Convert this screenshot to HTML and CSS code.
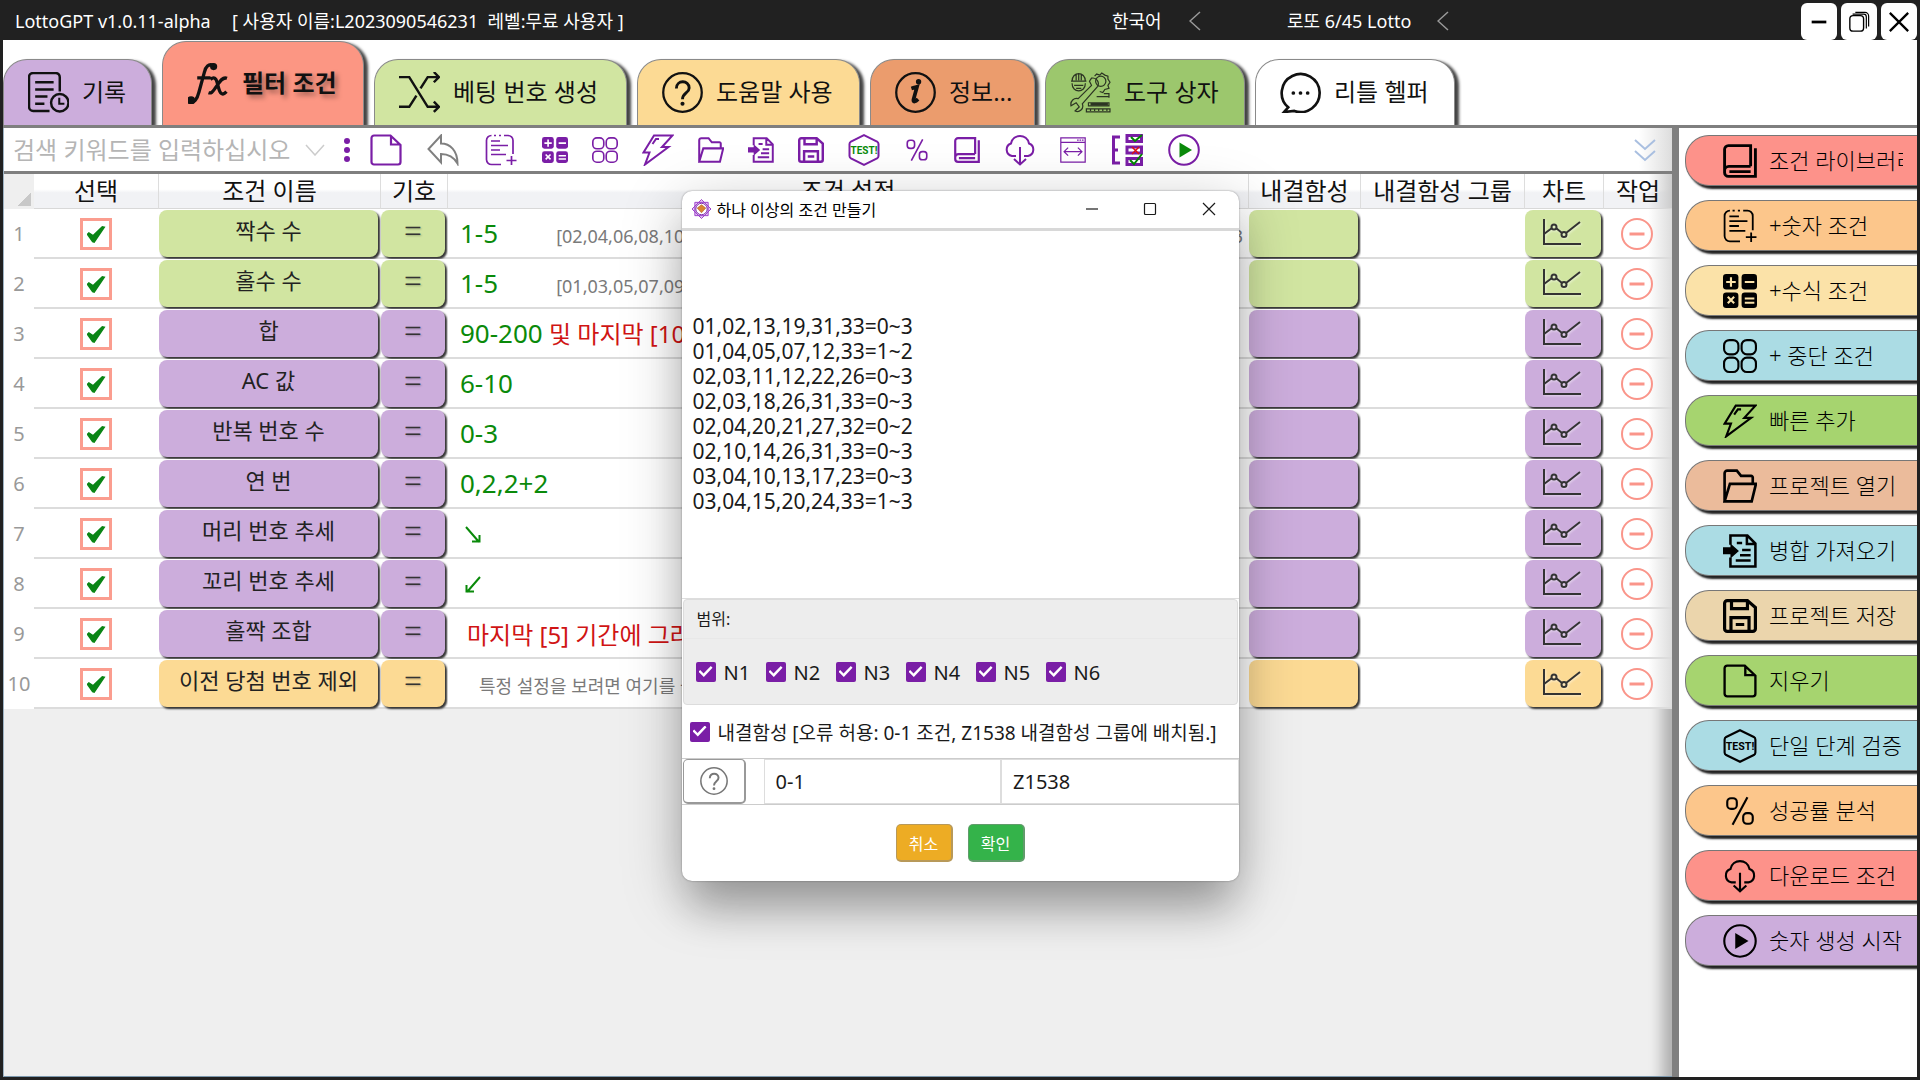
FILE: index.html
```html
<!DOCTYPE html>
<html lang="ko">
<head>
<meta charset="utf-8">
<title>LottoGPT</title>
<link rel="stylesheet" href="styles.css">
</head>
<body>
<svg class="sprite" aria-hidden="true">
  <symbol id="doc" viewBox="0 0 32 32"><path d="M4 1.500h16.500L30.500 11v17a2.500 2.500 0 0 1-2.500 2.500H4A2.500 2.500 0 0 1 1.500 28V4A2.500 2.500 0 0 1 4 1.500zM21 2v8.500h9" stroke-width="2.200"/></symbol>
  <symbol id="back" viewBox="0 0 32 32"><path d="M14 1.500v8c9 0 16.500 7 16.500 20-4-7-9-9.500-16.500-9.500v8.500L1.500 15z" stroke-width="2"/></symbol>
  <symbol id="list" viewBox="0 0 32 32"><path d="M9 1.500h2M14 1.500h2M19 1.500h4a5 5 0 0 1 5 5V20M6.500 1.500a5 5 0 0 0-5 5v19a5 5 0 0 0 5 5H16M6 7h9M6 11.500h17M6 16h9M6 20.500h15M26.500 22v9M21.500 26.500H31.500" stroke-width="1.700"/></symbol>
  <symbol id="calc" viewBox="0 0 32 32"><g fill="currentColor" stroke="none"><rect width="14.500" height="14.500" rx="3"/><rect x="17.500" width="14.500" height="14.500" rx="3"/><rect y="17.500" width="14.500" height="14.500" rx="3"/><rect x="17.500" y="17.500" width="14.500" height="14.500" rx="3"/></g><path class="cut" d="M7.500 3v9M3 7.500h9M20.500 7.500h9M4.500 21.500l6 6M10.500 21.500l-6 6M20.500 23h9M20.500 27h9" stroke-width="2"/></symbol>
  <symbol id="four" viewBox="0 0 32 32"><g stroke-width="2"><rect x="1" y="1" width="13.500" height="13.500" rx="5"/><rect x="17.500" y="1" width="13.500" height="13.500" rx="5"/><rect x="1" y="17.500" width="13.500" height="13.500" rx="5"/><rect x="17.500" y="17.500" width="13.500" height="13.500" rx="5"/></g></symbol>
  <symbol id="bolt" viewBox="0 0 32 32"><path d="M12 1.500h18.500L20 13h6.500L3 30.500l4.500-12H1.500zM10.500 10l3.500-5h3" stroke-width="2"/></symbol>
  <symbol id="folder" viewBox="0 0 32 32"><path d="M1.500 30.500V4a2.500 2.500 0 0 1 2.500-2.500h9l4 5h9.500A1.500 1.500 0 0 1 28 8v6M1.500 30.500l5-16.500h24.500l-4 16.500z" stroke-width="2.500"/></symbol>
  <symbol id="import" viewBox="0 0 32 32"><path d="M7 10V1.500h16L30.500 9v21.500H7V22M22.500 2v7.500h8M13 8.500h5M18 15h8M16 20h10M12 25h14" stroke-width="2.400"/><path d="M0 12.500h7V9l8 7-8 7v-4H0z" fill="currentColor" stroke="none"/></symbol>
  <symbol id="save" viewBox="0 0 32 32"><path d="M4 1.500h19L30.500 8v20a2.500 2.500 0 0 1-2.500 2.500H4A2.500 2.500 0 0 1 1.500 28V4A2.500 2.500 0 0 1 4 1.500zM8 2v7h15V2M7.500 30V17.500h17V30M12 24h8"/></symbol>
  <symbol id="test" viewBox="0 0 32 32"><path d="M16 1.200L29 7.500q1.500 1 1.500 2.500v12q0 1.500-1.500 2.500L16 30.800 3 24.500Q1.500 23.500 1.500 22V10q0-1.500 1.500-2.500z" stroke-width="2"/><text class="test" x="16" y="20" text-anchor="middle">TEST!</text></symbol>
  <symbol id="percent" viewBox="0 0 32 32"><rect x="4" y="4" width="9" height="10" rx="3.500"/><rect x="19" y="18" width="9" height="10" rx="3.500"/><path d="M23 3L9 29"/></symbol>
  <symbol id="book" viewBox="0 0 32 32"><path d="M26 21V1.500H5A3.500 3.500 0 0 0 1.500 5v22A3.500 3.500 0 0 0 5 30.500h25.500V4M26 21H5.500a4 4 0 0 0-4 4M6 26h20" stroke-width="2.700"/></symbol>
  <symbol id="cloud" viewBox="0 0 32 32"><path d="M12 22H8a6.500 6.500 0 0 1-1-12.500C9-.5 23-.5 25 9.500A6.500 6.500 0 0 1 24 22h-4M16 13v17M10 25l6 5.500 6-5.500" stroke-width="2"/></symbol>
  <symbol id="win" viewBox="0 0 32 32"><path d="M1 1h30v30H1zM1 6.500h30M21 3.800h2M24 3.800h2M27 3.800h2M5 18h22M10 13l-5 5 5 5M22 13l5 5-5 5" stroke-width="1.500"/></symbol>
  <symbol id="tree" viewBox="0 0 32 32"><path d="M9 3H2.500v26H9M2.500 16H7" stroke-width="3"/><g stroke-width="3"><rect x="16" y="1.500" width="14.500" height="6"/><rect x="16" y="13" width="14.500" height="6"/><rect x="16" y="24.500" width="14.500" height="6"/></g><path d="M20 3l4 4 7-6M19 26l4 4 8-10" stroke="#080"/><path d="M21 13l7 7M28 13l-7 7" stroke="#d11" stroke-width="1.500"/></symbol>
  <symbol id="play" viewBox="0 0 32 32"><circle cx="16" cy="16" r="14.800" stroke-width="2"/><path class="tri" d="M11.500 8.500L24 16l-12.500 7.500z"/></symbol>
  <symbol id="record" viewBox="0 0 40 40"><path d="M31 19V5a4 4 0 0 0-4-4H5a4 4 0 0 0-4 4v29a4 4 0 0 0 4 4h16M7 10h18M7 17h18M7 24h12M7 31h9" stroke-width="2.400"/><circle cx="31" cy="30" r="8.500" stroke-width="2.400"/><path d="M30.500 25v6h5" stroke-width="2"/></symbol>
  <symbol id="fx" viewBox="0 0 40 40"><path d="M2 37c4 3 7-2 8.500-8L16 9c1-5 4-9 9-6.500M9 14.500h13M22 16c5-4 6 1 7.500 7s3.500 10 8 5M38 15c-5-2-8 5-11 9s-4 6-7 5" stroke-width="3.200"/><circle cx="3" cy="36.500" r="2.500" fill="currentColor"/><circle cx="25" cy="3.500" r="2" fill="currentColor"/></symbol>
  <symbol id="shuffle" viewBox="0 0 40 40"><path d="M0 5h10l18 29h11M0 34h10l7-11M21 16l7-11h11M34 0l5 5-5 5M34 29l5 5-5 5" stroke-width="2.400"/></symbol>
  <symbol id="help" viewBox="0 0 40 40"><circle cx="20" cy="20" r="18.800" stroke-width="2.200"/><path d="M14 16c0-8.500 12.500-8.500 12.500-.5 0 5-6.500 5-6.500 11" stroke-width="2.800"/><circle cx="20" cy="31" r="2" fill="currentColor" stroke="none"/></symbol>
  <symbol id="info" viewBox="0 0 40 40"><circle cx="20" cy="20" r="18.800" stroke-width="2.200"/><path d="M16 16c3-1 4-1 5.500-1.500L18 27c-.5 3 2 2 4.500-.5" stroke-width="3.600"/><circle cx="23" cy="9.500" r="2.600" fill="currentColor" stroke="none"/></symbol>
  <symbol id="tools" viewBox="0 0 40 40"><g stroke-width="1.200"><path d="M1 9h15M2 9c0-10 13-10 13 0M6 2v6M8.500 1v7M11 2v6M2 11c0 10 13 10 13 0M4 13h9M6 16h5M24 4l2-2 3 1 2-2 3 2 3 1v3l2 3-2 3 1 3-4 1-2 3-3-1"/><circle cx="30" cy="9" r="5"/><path d="M21 6c5-1 8 4 6 8L12 31c2 5-3 9-7 7l4-4-3-4-5 3c-1-5 3-8 7-7L21 13l-2-4z"/><path d="M26 24h12M33 21h5v4M18 30h20v3H18zM16 36h23v3H16zM20 36v2M24 36v2M28 36v2M32 36v2M36 36v2"/></g><path d="M20 31.500h17" stroke-width="2.500"/></symbol>
  <symbol id="chat" viewBox="0 0 40 40"><path d="M8 34.500A18.500 18.500 0 1 1 14 38L4 39z" stroke-width="2.600"/><g fill="currentColor" stroke="none"><circle cx="13" cy="20.500" r="1.800"/><circle cx="20" cy="20.500" r="1.800"/><circle cx="27" cy="20.500" r="1.800"/></g></symbol>
  <symbol id="chart" viewBox="0 0 38 26"><path d="M1 0v25h37M1 15l8-6M13 9l6 5M23 14L37 3" stroke-width="2"/><circle cx="11" cy="8" r="2.500" stroke-width="2"/><circle cx="21" cy="15.500" r="2.500" stroke-width="2"/></symbol>
  <symbol id="minus" viewBox="0 0 32 32"><circle cx="16" cy="16" r="15" stroke-width="2"/><path d="M8.500 16h15"/></symbol>
  <symbol id="chev" viewBox="0 0 12 20"><path d="M11 1L1 10l10 9" stroke-width="1.500"/></symbol>
  <symbol id="down" viewBox="0 0 20 12"><path d="M1 1l9 10 9-10" stroke-width="1.500"/></symbol>
</svg>

<header class="titlebar">
  <span class="app">LottoGPT v1.0.11-alpha</span>
  <span class="user">[ 사용자 이름:L2023090546231&nbsp; 레벨:무료 사용자 ]</span>
  <button class="pick">한국어 <svg><use href="#chev"/></svg></button>
  <button class="pick game">로또 6/45 Lotto <svg><use href="#chev"/></svg></button>
  <div class="controls">
    <button aria-label="최소화"><svg viewBox="0 0 24 24"><path d="M4 12h16" stroke-width="3"/></svg></button>
    <button aria-label="복원"><svg viewBox="0 0 24 24"><rect x="2" y="5" width="15" height="17" rx="3.500" stroke-width="1.500"/><path d="M5 3.500h12a3 3 0 0 1 3 3V19M8 1.500h10.500a4 4 0 0 1 4 4V17" stroke-width="1.300"/></svg></button>
    <button aria-label="닫기"><svg viewBox="0 0 24 24"><path d="M2 2l20 20M22 2L2 22" stroke-width="2.500"/></svg></button>
  </div>
</header>

<nav class="tabs">
  <button class="tab t1"><svg><use href="#record"/></svg><span>기록</span></button>
  <button class="tab t2 active"><svg><use href="#fx"/></svg><span>필터 조건</span></button>
  <button class="tab t3"><svg><use href="#shuffle"/></svg><span>베팅 번호 생성</span></button>
  <button class="tab t4"><svg><use href="#help"/></svg><span>도움말 사용</span></button>
  <button class="tab t5"><svg><use href="#info"/></svg><span>정보...</span></button>
  <button class="tab t6"><svg class="faint"><use href="#tools"/></svg><span>도구 상자</span></button>
  <button class="tab t7"><svg><use href="#chat"/></svg><span>리틀 헬퍼</span></button>
</nav>

<div class="work">
  <main class="left">
    <div class="toolbar">
      <input class="search" type="text" aria-label="검색" placeholder="검색 키워드를 입력하십시오">
      <svg class="drop"><use href="#down"/></svg>
      <svg class="dots" viewBox="0 0 6 24"><circle cx="3" cy="3" r="3"/><circle cx="3" cy="12" r="3"/><circle cx="3" cy="21" r="3"/></svg>
      <div class="tools">
        <button class="big" aria-label="지우기"><svg><use href="#doc"/></svg></button>
        <button class="big wide undo" aria-label="되돌리기"><svg><use href="#back"/></svg></button>
        <button class="big wide" aria-label="숫자 조건"><svg><use href="#list"/></svg></button>
        <button aria-label="수식 조건"><svg><use href="#calc"/></svg></button>
        <button aria-label="중단 조건"><svg><use href="#four"/></svg></button>
        <button class="big" aria-label="빠른 추가"><svg><use href="#bolt"/></svg></button>
        <button aria-label="프로젝트 열기"><svg><use href="#folder"/></svg></button>
        <button aria-label="병합 가져오기"><svg><use href="#import"/></svg></button>
        <button aria-label="프로젝트 저장"><svg><use href="#save"/></svg></button>
        <button class="big green" aria-label="단일 단계 검증"><svg><use href="#test"/></svg></button>
        <button class="thin" aria-label="성공률 분석"><svg><use href="#percent"/></svg></button>
        <button aria-label="조건 라이브러리"><svg><use href="#book"/></svg></button>
        <button class="big" aria-label="다운로드 조건"><svg><use href="#cloud"/></svg></button>
        <button aria-label="열 너비"><svg><use href="#win"/></svg></button>
        <button class="big wide" aria-label="조건 선택"><svg><use href="#tree"/></svg></button>
        <button class="big green" aria-label="숫자 생성 시작"><svg><use href="#play"/></svg></button>
      </div>
      <button class="more" aria-label="더 보기"><svg viewBox="0 0 22 24"><path d="M1 2l10 9L21 2M1 13l10 9 10-9" stroke-width="2"/></svg></button>
    </div>

    <table class="grid">
      <colgroup><col class="c0"><col class="c1"><col class="c2"><col class="c3"><col><col class="c5"><col class="c6"><col class="c7"><col class="c8"></colgroup>
      <thead><tr><th class="corner"></th><th>선택</th><th>조건 이름</th><th>기호</th><th>조건 설정</th><th>내결함성</th><th>내결함성 그룹</th><th>차트</th><th>작업</th></tr></thead>
      <tbody>
        <tr class="lime"><td>1</td><td><input type="checkbox" checked aria-label="1"></td><td><button>짝수 수</button></td><td><button class="eq">=</button></td><td class="set"><b>1-5</b><small class="nums">[02,04,06,08,10,12,14,16,18,20,22,24,26,28,30,32,34,36,38,40,42,44] 1,2,3,4,5,6,3,3</small></td><td><button aria-label="내결함성"></button></td><td></td><td><button class="ch" aria-label="차트"><svg><use href="#chart"/></svg></button></td><td><button class="del" aria-label="삭제"><svg><use href="#minus"/></svg></button></td></tr>
        <tr class="lime"><td>2</td><td><input type="checkbox" checked aria-label="2"></td><td><button>홀수 수</button></td><td><button class="eq">=</button></td><td class="set"><b>1-5</b><small class="nums">[01,03,05,07,09,11,13,15,17,19,21,23,25,27,29,31,33,35,37,39,41,43,45,1,2,2,2,2,2,</small></td><td><button aria-label="내결함성"></button></td><td></td><td><button class="ch" aria-label="차트"><svg><use href="#chart"/></svg></button></td><td><button class="del" aria-label="삭제"><svg><use href="#minus"/></svg></button></td></tr>
        <tr><td>3</td><td><input type="checkbox" checked aria-label="3"></td><td><button>합</button></td><td><button class="eq">=</button></td><td class="set"><b>90-200</b> <em>및 마지막 [10] 기간</em></td><td><button aria-label="내결함성"></button></td><td></td><td><button class="ch" aria-label="차트"><svg><use href="#chart"/></svg></button></td><td><button class="del" aria-label="삭제"><svg><use href="#minus"/></svg></button></td></tr>
        <tr><td>4</td><td><input type="checkbox" checked aria-label="4"></td><td><button>AC 값</button></td><td><button class="eq">=</button></td><td class="set"><b>6-10</b></td><td><button aria-label="내결함성"></button></td><td></td><td><button class="ch" aria-label="차트"><svg><use href="#chart"/></svg></button></td><td><button class="del" aria-label="삭제"><svg><use href="#minus"/></svg></button></td></tr>
        <tr><td>5</td><td><input type="checkbox" checked aria-label="5"></td><td><button>반복 번호 수</button></td><td><button class="eq">=</button></td><td class="set"><b>0-3</b></td><td><button aria-label="내결함성"></button></td><td></td><td><button class="ch" aria-label="차트"><svg><use href="#chart"/></svg></button></td><td><button class="del" aria-label="삭제"><svg><use href="#minus"/></svg></button></td></tr>
        <tr><td>6</td><td><input type="checkbox" checked aria-label="6"></td><td><button>연 번</button></td><td><button class="eq">=</button></td><td class="set"><b>0,2,2+2</b></td><td><button aria-label="내결함성"></button></td><td></td><td><button class="ch" aria-label="차트"><svg><use href="#chart"/></svg></button></td><td><button class="del" aria-label="삭제"><svg><use href="#minus"/></svg></button></td></tr>
        <tr><td>7</td><td><input type="checkbox" checked aria-label="7"></td><td><button>머리 번호 추세</button></td><td><button class="eq">=</button></td><td class="set"><svg class="arrow" viewBox="0 0 18 18"><path d="M2 1l13 15M8 15.500h7.500V9"/></svg></td><td><button aria-label="내결함성"></button></td><td></td><td><button class="ch" aria-label="차트"><svg><use href="#chart"/></svg></button></td><td><button class="del" aria-label="삭제"><svg><use href="#minus"/></svg></button></td></tr>
        <tr><td>8</td><td><input type="checkbox" checked aria-label="8"></td><td><button>꼬리 번호 추세</button></td><td><button class="eq">=</button></td><td class="set"><svg class="arrow" viewBox="0 0 18 18"><path d="M16 1L3 16M10 15.500H2.500V9"/></svg></td><td><button aria-label="내결함성"></button></td><td></td><td><button class="ch" aria-label="차트"><svg><use href="#chart"/></svg></button></td><td><button class="del" aria-label="삭제"><svg><use href="#minus"/></svg></button></td></tr>
        <tr><td>9</td><td><input type="checkbox" checked aria-label="9"></td><td><button>홀짝 조합</button></td><td><button class="eq">=</button></td><td class="set"><em class="lead">마지막 [5] 기간에 그려진</em></td><td><button aria-label="내결함성"></button></td><td></td><td><button class="ch" aria-label="차트"><svg><use href="#chart"/></svg></button></td><td><button class="del" aria-label="삭제"><svg><use href="#minus"/></svg></button></td></tr>
        <tr class="amber"><td>10</td><td><input type="checkbox" checked aria-label="10"></td><td><button>이전 당첨 번호 제외</button></td><td><button class="eq">=</button></td><td class="set"><small class="hint">특정 설정을 보려면 여기를 클릭하세요</small></td><td><button aria-label="내결함성"></button></td><td></td><td><button class="ch" aria-label="차트"><svg><use href="#chart"/></svg></button></td><td><button class="del" aria-label="삭제"><svg><use href="#minus"/></svg></button></td></tr>
      </tbody>
    </table>
  </main>

  <aside class="side">
    <button class="coral"><svg><use href="#book"/></svg><span>조건 라이브러리</span></button>
    <button class="orange"><svg><use href="#list"/></svg><span>+숫자 조건</span></button>
    <button class="cream"><svg><use href="#calc"/></svg><span>+수식 조건</span></button>
    <button class="sky"><svg><use href="#four"/></svg><span>+ 중단 조건</span></button>
    <button class="leaf"><svg><use href="#bolt"/></svg><span>빠른 추가</span></button>
    <button class="peach"><svg><use href="#folder"/></svg><span>프로젝트 열기</span></button>
    <button class="sky"><svg><use href="#import"/></svg><span>병합 가져오기</span></button>
    <button class="sand"><svg><use href="#save"/></svg><span>프로젝트 저장</span></button>
    <button class="leaf"><svg><use href="#doc"/></svg><span>지우기</span></button>
    <button class="sky"><svg><use href="#test"/></svg><span>단일 단계 검증</span></button>
    <button class="orange thin"><svg><use href="#percent"/></svg><span>성공률 분석</span></button>
    <button class="coral"><svg><use href="#cloud"/></svg><span>다운로드 조건</span></button>
    <button class="violet"><svg><use href="#play"/></svg><span>숫자 생성 시작</span></button>
  </aside>
</div>

<section class="dialog" role="dialog" aria-labelledby="dlg-title">
  <div class="dlg-head">
    <svg class="logo" viewBox="0 0 20 20"><path d="M3 3h14v14H3zM10 0l10 10-10 10L0 10z" fill="#e4c8f4" stroke="#9a3cc8" stroke-width="1"/><circle cx="10" cy="10" r="6" fill="#fff" stroke="#7a2aa8" stroke-width="1"/><path d="M10 5.500l4.500 3.500-4.500 5-4.500-5z" fill="#d98432" stroke="#a85a20" stroke-width=".6"/></svg>
    <h1 id="dlg-title">하나 이상의 조건 만들기</h1>
    <button aria-label="최소화"><svg viewBox="0 0 14 14"><path d="M1 7h12"/></svg></button>
    <button aria-label="최대화"><svg viewBox="0 0 14 14"><rect x="1.500" y="1.500" width="11" height="11" rx="1"/></svg></button>
    <button aria-label="닫기"><svg viewBox="0 0 14 14"><path d="M1 1l12 12M13 1L1 13"/></svg></button>
  </div>
  <textarea aria-label="조건 목록" spellcheck="false">01,02,13,19,31,33=0~3
01,04,05,07,12,33=1~2
02,03,11,12,22,26=0~3
02,03,18,26,31,33=0~3
02,04,20,21,27,32=0~2
02,10,14,26,31,33=0~3
03,04,10,13,17,23=0~3
03,04,15,20,24,33=1~3</textarea>
  <div class="range">
    <div class="range-name">범위:</div>
    <div class="range-list">
      <label><input type="checkbox" checked>N1</label>
      <label><input type="checkbox" checked>N2</label>
      <label><input type="checkbox" checked>N3</label>
      <label><input type="checkbox" checked>N4</label>
      <label><input type="checkbox" checked>N5</label>
      <label><input type="checkbox" checked>N6</label>
    </div>
  </div>
  <label class="tolerance"><input type="checkbox" checked>내결함성 [오류 허용: 0-1 조건, Z1538 내결함성 그룹에 배치됨.]</label>
  <div class="fields">
    <button class="ask" aria-label="도움말"><svg><use href="#help"/></svg></button>
    <input type="text" value="0-1" aria-label="오류 허용">
    <input type="text" value="Z1538" aria-label="내결함성 그룹">
  </div>
  <div class="actions"><button class="cancel">취소</button><button class="ok">확인</button></div>
</section>
</body>
</html>
```
FILE: styles.css
```css
* { box-sizing: border-box; }
body {
  margin: 0;
  min-height: 100vh;
  display: flex;
  flex-direction: column;
  position: relative;
  border: 3px solid #212121;
  background: #fff;
  color: #111;
  font-family: "Noto Sans", "Noto Sans CJK KR", sans-serif;
}
button, input, textarea { font: inherit; color: inherit; margin: 0; padding: 0; border: 0; background: none; }
svg { fill: none; stroke: currentColor; stroke-width: 3; flex: none; display: block; }
.sprite { display: none; }

/* title bar */
.titlebar { height: 37px; display: flex; align-items: center; background: #212121; color: #fff; font-size: 18px; line-height: 32px; }
.titlebar > span, .pick { padding-bottom: 2px; }
.app { width: 229px; padding-left: 12px; white-space: nowrap; }
.user { flex: 1; white-space: nowrap; }
.pick { display: flex; align-items: center; gap: 27px; width: 175px; white-space: nowrap; }
.pick.game { width: 514px; gap: 26px; }
.pick svg { width: 12px; height: 20px; color: #999; }
.controls { display: flex; gap: 4px; }
.controls button { width: 36px; height: 37px; display: grid; place-items: center; background: #fff; color: #000; border-radius: 6px; }
.controls svg { width: 22px; height: 24px; }

/* tabs */
.tabs { height: 88px; display: flex; align-items: flex-end; gap: 10px; overflow: hidden; border-bottom: 3px solid #7f7f7f; font-size: 24px; }
.tab { height: 66px; display: flex; align-items: center; gap: 13px; padding-left: 24px; white-space: nowrap; border: 1px solid #8a8a8a; border-bottom: 0; border-radius: 24px 24px 0 0; box-shadow: 4px 2px 3px #444; }
.tab span { padding-bottom: 4px; }
.tab svg { width: 41px; height: 41px; }
.tab.active { height: 84px; font-weight: 700; text-shadow: 3px 3px 5px #0006; padding-left: 25px; }
.faint { opacity: .8; }
.t1 { width: 149px; background: #ccaddc; }
.t2 { width: 202px; background: #fc9683; }
.t3 { width: 253px; background: #d1e5a1; }
.t4 { width: 223px; background: #fcda94; }
.t5 { width: 165px; background: #eb9c6d; }
.t6 { width: 200px; background: #9cc76d; }
.t7 { width: 200px; background: #fff; }

/* main area */
.work { flex: 1; display: flex; }
.left { flex: 1; min-width: 0; background: #efefef; border-left: 1px solid #9fb4c4; border-bottom: 1px solid #7c98ad; box-shadow: inset -22px 0 14px -12px #0004; }
.toolbar { height: 46px; display: flex; align-items: center; background: linear-gradient(90deg, #fff 98%, #ddd); border-bottom: 3px solid #7f7f7f; color: #7a1ea6; }
.search { width: 287px; height: 40px; padding-left: 9px; font-size: 24px; color: #333; outline: 0; }
.search::placeholder { color: #b5b5b5; opacity: 1; }
.drop { width: 20px; height: 12px; margin: 0 19px 0 14px; color: #ccc; }
.dots { width: 6px; height: 24px; fill: currentColor; stroke: none; margin-right: 20px; }
.tools { display: flex; align-items: center; gap: 24px; }
.tools button svg { width: 26px; height: 26px; }
.tools .big svg { width: 32px; height: 32px; stroke-width: 2; }
.tools .wide svg { width: 34px; }
.tools .undo { color: #808080; }
.thin svg { stroke-width: 2; }
.tools .green { --accent: #0a8a0a; }
.cut { stroke: var(--gap, #fff); }
.tri { fill: var(--accent, currentColor); stroke: none; }
.test { fill: var(--accent, currentColor); stroke: none; font: 700 10px Roboto, sans-serif; }
.more { margin: 0 16px 0 auto; color: #a9bfe0; }
.more svg { width: 22px; height: 24px; }

/* condition table */
.grid { width: 100%; table-layout: fixed; border-collapse: separate; border-spacing: 0; }
.c0 { width: 30px; } .c1 { width: 125px; } .c2 { width: 222px; } .c3 { width: 67px; }
.c5 { width: 112px; } .c6 { width: 164px; } .c7 { width: 79px; } .c8 { width: 68px; }
th { height: 35px; padding: 0; font-size: 24px; font-weight: 400; line-height: 34px; white-space: nowrap; border-right: 1px solid #ddd; border-bottom: 1px solid #d8d8d8; background: linear-gradient(#fff 45%, #f1f2f5 55%); }
th:last-child { border-right: 0; }
th.corner { background: linear-gradient(135deg, transparent 50%, #c8c8c8 50%) 14px 17px / 13px 15px no-repeat #efefef; border: 0; }
td { height: 50px; padding: 0; background: #fff; border-bottom: 2px solid #dcdcdc; }
td:first-child { text-align: center; font-size: 20px; color: #999; border-bottom-color: #fff; }
td:nth-child(2), td:last-child { text-align: center; }
.left td:last-child { background: linear-gradient(90deg, #fff 65%, #ddd); }
.left th:last-child { background: linear-gradient(90deg, #fff0 65%, #ccc), linear-gradient(#fff 45%, #f1f2f5 55%); }
td button { display: block; width: calc(100% - 3px); height: 47px; padding-bottom: 6px; font-size: 22px; line-height: 40px; white-space: nowrap; color: #222; background: #ccaddc; border-radius: 8px; box-shadow: 2px 2px 2px #333; }
.lime button { background: #d1e5a1; }
.amber button { background: #fcda94; }
td .eq { font-size: 32px; font-weight: 300; color: #333; text-shadow: 1px 1px 2px #0004; }
td .ch { padding: 0 0 3px 18px; }
.ch svg { width: 38px; height: 26px; color: #333; filter: drop-shadow(1px 1px 1px #fff8); }
tr .del { width: 32px; height: 32px; padding: 0; margin: 2px auto 0; background: none; border-radius: 50%; box-shadow: none; color: #fa958a; }
td:last-child { padding-right: 2px; }
.del svg { width: 32px; height: 32px; }
td input { appearance: none; display: block; width: 32px; height: 32px; margin: 2px auto 0; padding: 5px 4px; border: 3px solid #fb9d8f; }
td:nth-child(2) { padding-right: 2px; }
td input::before { content: ""; display: block; width: 19px; height: 17px; background: #0a8515; clip-path: polygon(0 48%, 12% 36%, 34% 52%, 82% 0, 100% 4%, 42% 100%, 30% 96%); }
.set { padding-left: 12px; overflow: hidden; white-space: nowrap; font-size: 24px; color: #0a8a0a; }
.set b { font-size: 26px; font-weight: 400; }
.set em { font-style: normal; color: #d01414; }
.set .lead { padding-left: 7px; }
.set small { font-size: 18px; color: #7a7a7a; }
.nums { padding-left: 58px; }
.hint { padding-left: 19px; }
.arrow { width: 18px; height: 18px; stroke-width: 2; margin: 4px 0 0 4px; }

/* side panel */
.side { width: 245px; padding: 7px 0 0 6px; display: flex; flex-direction: column; gap: 14px; background: #fff; border-left: 7px solid #808080; }
.side button { height: 51px; display: flex; align-items: center; padding-left: 37px; gap: 12px; color: #000; font-size: 22px; font-weight: 300; white-space: nowrap; border: 1px solid #777; border-right: 0; border-radius: 24px 0 0 24px; background: var(--gap); box-shadow: 3px 3px 2px #222; clip-path: inset(0 0 -8px -2px); }
.side svg { width: 34px; height: 34px; }
.side span { width: 134px; padding-bottom: 4px; overflow: hidden; text-align: left; }
.coral { --gap: #fd928a; } .orange { --gap: #fcc68b; } .cream { --gap: #fbe2a8; }
.sky { --gap: #abdce4; } .leaf { --gap: #a6d46f; } .peach { --gap: #ebbb9b; }
.sand { --gap: #ebd5ac; } .violet { --gap: #ccaddc; }

/* dialog */
.dialog { position: absolute; top: 188px; left: 0; right: 0; width: 557px; margin: 0 auto; background: #fff; color: #1a1a1a; border-radius: 10px; box-shadow: 0 0 2px #0006, 0 16px 60px #0004, 0 36px 40px -8px #0003; }
.dlg-head { height: 40px; display: flex; align-items: center; padding: 0 10px 1px; border-bottom: 3px solid #d8d8d8; }
.logo { width: 19px; height: 20px; margin-right: 6px; }
h1 { flex: 1; margin: 0; font-size: 16px; font-weight: 400; color: #000; }
.dlg-head button { width: 58px; height: 30px; display: grid; place-items: center; }
.dlg-head button:last-child { width: 40px; margin-left: 10px; }
.dlg-head button svg { width: 14px; height: 14px; stroke-width: 1.2; }
textarea { display: block; width: 100%; height: 368px; padding: 83px 11px 0; font-size: 21px; line-height: 25px; border-bottom: 1px solid #ddd; resize: none; outline: 0; overflow: hidden; }
.range { height: 106px; margin: 0 1px; background: #ededed; border: 1px solid #dcdcdc; border-radius: 4px; }
.range-name { height: 39px; padding: 0 13px; font-size: 16px; line-height: 38px; border-bottom: 1px solid #e8e8e8; }
.range-list { height: 66px; display: flex; align-items: center; padding-left: 12px; font-size: 20px; }
.dialog label { display: flex; align-items: center; gap: 8px; }
.range-list label { width: 70px; }
.dialog label input { appearance: none; flex: none; width: 20px; height: 20px; padding: 4px 3px; background: #7a1ea6; border-radius: 2px; }
.dialog label input::before { content: ""; display: block; width: 14px; height: 11px; background: #fff; clip-path: polygon(0 52%, 12% 36%, 36% 68%, 88% 0, 100% 16%, 38% 100%); }
.dialog .tolerance { height: 54px; padding-left: 8px; font-size: 19px; white-space: nowrap; border-bottom: 1px solid #ccc; }
.fields { height: 46px; display: flex; border-bottom: 1px solid #ccc; }
.ask { width: 63px; height: 45px; margin: 0 18px 0 1px; display: grid; place-items: center; color: #777; border: 1px solid #999; border-right-width: 2px; border-bottom-width: 2px; border-radius: 5px; }
.ask svg { width: 28px; height: 28px; }
.fields input { flex: 1; min-width: 0; padding-left: 11px; font-size: 20px; border: 1px solid #ddd; outline: 0; }
.actions { display: flex; justify-content: center; gap: 15px; padding: 19px 0; font-size: 16px; }
.actions button { width: 57px; height: 38px; color: #fff; border-radius: 5px; border: 1px solid #8888; border-right: 2px solid #8888; border-bottom: 2px solid #8888; }
.cancel { background: #edac24; }
.ok { background: #34b34a; }
```
